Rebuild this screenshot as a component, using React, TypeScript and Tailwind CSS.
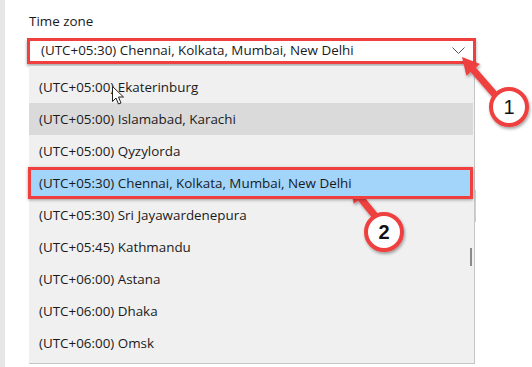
import React from "react";

const ZONES = [
  "(UTC+05:00) Ekaterinburg",
  "(UTC+05:00) Islamabad, Karachi",
  "(UTC+05:00) Qyzylorda",
  "(UTC+05:30) Chennai, Kolkata, Mumbai, New Delhi",
  "(UTC+05:30) Sri Jayawardenepura",
  "(UTC+05:45) Kathmandu",
  "(UTC+06:00) Astana",
  "(UTC+06:00) Dhaka",
  "(UTC+06:00) Omsk",
];

const HOVER = 1;
const SELECTED = 3;

// red callout arrow from (x1,y1) to tip (x2,y2)
function arrowPoints(x1: number, y1: number, x2: number, y2: number) {
  const dx = x2 - x1;
  const dy = y2 - y1;
  const len = Math.hypot(dx, dy);
  const ux = dx / len;
  const uy = dy / len;
  const px = -uy;
  const py = ux;
  const head = 17;
  const hw = 9;
  const sw = 3.5;
  const bx = x2 - ux * head;
  const by = y2 - uy * head;
  const pts = [
    [x1 + px * sw, y1 + py * sw],
    [bx + px * sw, by + py * sw],
    [bx + px * hw, by + py * hw],
    [x2, y2],
    [bx - px * hw, by - py * hw],
    [bx - px * sw, by - py * sw],
    [x1 - px * sw, y1 - py * sw],
  ];
  return pts.map((p) => p.join(",")).join(" ");
}

function Callouts() {
  return (
    <svg
      className="pointer-events-none absolute left-0 top-0"
      width="532"
      height="367"
      viewBox="0 0 532 367"
    >
      <defs>
        <filter id="sh" x="-30%" y="-30%" width="160%" height="160%">
          <feDropShadow dx="1" dy="2" stdDeviation="1.5" floodColor="#000" floodOpacity="0.35" />
        </filter>
      </defs>
      <g filter="url(#sh)">
        <polygon points={arrowPoints(496, 96, 462, 57)} fill="#ef3f3f" />
        <circle cx="509" cy="107" r="18" fill="#fff" stroke="#ef3f3f" strokeWidth="4" />
        <polygon points={arrowPoints(376, 217, 350, 185)} fill="#ef3f3f" />
        <circle cx="384" cy="232" r="18" fill="#fff" stroke="#ef3f3f" strokeWidth="4" />
      </g>
      <text x="509" y="114" textAnchor="middle" fontSize="20" fontFamily="Liberation Sans, Arial, sans-serif" fill="#111">
        1
      </text>
      <text x="384" y="239" textAnchor="middle" fontSize="20" fontWeight="bold" fontFamily="Liberation Sans, Arial, sans-serif" fill="#111">
        2
      </text>
      {/* mouse pointer */}
      <path
        d="M112.5 86.5 L112.5 101.5 L116 98 L118.5 104 L121 103 L118.5 97 L123.5 97 Z"
        fill="#fff"
        stroke="#222"
        strokeWidth="1"
        strokeLinejoin="round"
      />
    </svg>
  );
}

export default function App() {
  return (
    <div
      className="relative flex h-[367px] w-[532px] overflow-hidden bg-white text-[13.4px] text-[#1a1a1a]"
      style={{ fontFamily: '"Segoe UI", "Open Sans", "Noto Sans", sans-serif' }}
    >
      <div className="h-full w-[5px] shrink-0 bg-[#e6e6e6]" />

      <div className="flex flex-col pl-[22px] pt-[11px]">
        <label className="ml-[2px] leading-[20px]">Time zone</label>

        {/* combo box */}
        <div className="mt-[7px] flex h-[26px] w-[449px] items-center justify-between border-[3px] border-[#ef3f3f] bg-white pl-[11px] pr-[8px] shadow-[0_2px_3px_rgba(0,0,0,0.35)]">
          <span className="leading-none">(UTC+05:30) Chennai, Kolkata, Mumbai, New Delhi</span>
          <svg width="13" height="8" viewBox="0 0 13 8">
            <path d="M0.5 0.5 L6.5 6.5 L12.5 0.5" fill="none" stroke="#555" strokeWidth="1" />
          </svg>
        </div>

        {/* dropdown list */}
        <div className="relative ml-[2px] mt-[2px] h-[298px] w-[446px] border-b border-r border-[#c6c6c6] bg-[#f0f0f0] pt-[5px]">
          {ZONES.map((z, i) => {
            if (i === SELECTED) {
              return (
                <div
                  key={z}
                  className="relative z-10 -ml-[1px] flex h-[32px] w-[445px] items-center border-[3px] border-[#ef3f3f] bg-[#a3d4fa] pl-[8px] shadow-[0_1px_3px_rgba(0,0,0,0.35)]"
                >
                  {z}
                </div>
              );
            }
            return (
              <div
                key={z}
                className={`flex h-[32px] w-[444px] items-center pl-[10px] ${
                  i === HOVER ? "bg-[#dadada]" : ""
                }`}
              >
                {z}
              </div>
            );
          })}
          {/* scrollbar thumb */}
          <div className="absolute left-[441px] top-[182px] h-[18px] w-[2px] bg-[#8a8a8a]" />
        </div>
      </div>

      <div className="absolute left-[475px] top-[190px] h-[32px] w-[1px] bg-[#cfcfcf]" />

      <Callouts />
    </div>
  );
}
